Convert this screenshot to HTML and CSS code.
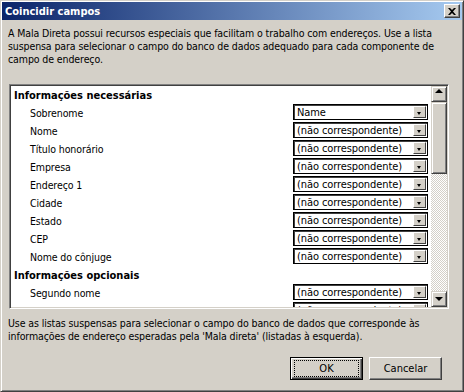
FILE: index.html
```html
<!DOCTYPE html>
<html lang="pt">
  <head>
    <meta charset="UTF-8" />
    <title>Coincidir campos</title>
    <link rel="stylesheet" href="styles.css">
  </head>
  <body>
    <div class="window">
      <div class="titlebar">
        <span class="title">Coincidir campos</span>
        <span class="close">
          <svg width="8" height="7" viewBox="0 0 8 7"><path d="M0 0h2l2 2 2-2h2L5 3.5 8 7H6L4 5 2 7H0l3-3.5z" fill="#000"/></svg>
        </span>
      </div>

      <p class="intro">A Mala Direta possui recursos especiais que facilitam o trabalho com endereços. Use a lista suspensa para selecionar o campo do banco de dados adequado para cada componente de campo de endereço.</p>

      <div class="listbox">
        <div class="rows">
          <div class="row head">Informações necessárias</div>
          <div class="row"><span class="label">Sobrenome</span><span class="combo"><span class="val">Name</span><span class="drop"></span></span></div>
          <div class="row"><span class="label">Nome</span><span class="combo"><span class="val">(não correspondente)</span><span class="drop"></span></span></div>
          <div class="row"><span class="label">Título honorário</span><span class="combo"><span class="val">(não correspondente)</span><span class="drop"></span></span></div>
          <div class="row"><span class="label">Empresa</span><span class="combo"><span class="val">(não correspondente)</span><span class="drop"></span></span></div>
          <div class="row"><span class="label">Endereço 1</span><span class="combo"><span class="val">(não correspondente)</span><span class="drop"></span></span></div>
          <div class="row"><span class="label">Cidade</span><span class="combo"><span class="val">(não correspondente)</span><span class="drop"></span></span></div>
          <div class="row"><span class="label">Estado</span><span class="combo"><span class="val">(não correspondente)</span><span class="drop"></span></span></div>
          <div class="row"><span class="label">CEP</span><span class="combo"><span class="val">(não correspondente)</span><span class="drop"></span></span></div>
          <div class="row"><span class="label">Nome do cônjuge</span><span class="combo"><span class="val">(não correspondente)</span><span class="drop"></span></span></div>
          <div class="row head">Informações opcionais</div>
          <div class="row"><span class="label">Segundo nome</span><span class="combo"><span class="val">(não correspondente)</span><span class="drop"></span></span></div>
          <div class="row"><span class="label">Sufixo</span><span class="combo"><span class="val">(não correspondente)</span><span class="drop"></span></span></div>
        </div>
        <div class="scrollbar">
          <span class="sbtn up"></span>
          <div class="track"><span class="thumb"></span></div>
          <span class="sbtn down"></span>
        </div>
      </div>

      <p class="note">Use as listas suspensas para selecionar o campo do banco de dados que corresponde às informações de endereço esperadas pela 'Mala direta' (listadas à esquerda).</p>

      <div class="buttons">
        <button class="btn default"><span class="focus">OK</span></button>
        <button class="btn">Cancelar</button>
      </div>
    </div>
  </body>
</html>
```

FILE: styles.css
```css
body {
  margin: 0;
  background: #d4d0c8;
  font-family: "DejaVu Sans Condensed", "DejaVu Sans", sans-serif;
  font-size: 10.5px;
  letter-spacing: -0.1px;
  color: #000;
}

.window {
  width: 464px;
  height: 392px;
  box-sizing: border-box;
  background: #d4d0c8;
  border: 1px solid;
  border-color: #d4d0c8 #404040 #404040 #d4d0c8;
  box-shadow: inset 1px 1px #fff, inset -1px -1px #808080;
  padding: 1px;
}

.titlebar {
  height: 18px;
  display: flex;
  align-items: center;
  justify-content: space-between;
  padding: 0 2px 0 3px;
  background: linear-gradient(to right, #0a246a, #a6caf0);
}

.title {
  color: #fff;
  font-weight: bold;
  font-size: 11px;
  letter-spacing: 0;
}

.close {
  width: 16px;
  height: 14px;
  box-sizing: border-box;
  display: flex;
  align-items: center;
  justify-content: center;
  background: #d4d0c8;
  border: 1px solid;
  border-color: #fff #404040 #404040 #fff;
  box-shadow: inset -1px -1px #808080;
}

.intro {
  margin: 7px 0 0;
  padding: 0 6px 0 6px;
  line-height: 13px;
}

.listbox {
  margin: 18px 0 0 7px;
  width: 440px;
  height: 225px;
  box-sizing: border-box;
  display: flex;
  background: #fff;
  border: 1px solid;
  border-color: #808080 #fff #fff #808080;
  box-shadow: inset 1px 1px #404040, inset -1px -1px #d4d0c8;
  padding: 1px;
}

.rows {
  flex: 1;
  overflow: hidden;
}

.row {
  height: 18px;
  display: flex;
  align-items: center;
  padding-left: 19px;
}

.row.head {
  padding-left: 3px;
  font-weight: bold;
  font-size: 11px;
  letter-spacing: 0;
}

.label {
  flex: 1;
}

.combo {
  align-self: flex-start;
  width: 135px;
  height: 16px;
  margin-right: 3px;
  box-sizing: border-box;
  display: flex;
  align-items: center;
  background: #fff;
  border: 1px solid #000;
  box-shadow: inset 1px 1px #404040;
  padding: 1px 1px 1px 3px;
  font-size: 11px;
}

.val {
  flex: 1;
}

.drop {
  width: 13px;
  height: 12px;
  box-sizing: border-box;
  position: relative;
  background: #d4d0c8;
  border: 1px solid;
  border-color: #fff #404040 #404040 #fff;
}

.drop::after {
  content: "";
  position: absolute;
  left: 3px;
  top: 5px;
  border: 2.5px solid transparent;
  border-top: 3px solid #000;
  border-bottom: 0;
}

.scrollbar {
  width: 16px;
  display: flex;
  flex-direction: column;
}

.sbtn {
  width: 16px;
  height: 16px;
  box-sizing: border-box;
  position: relative;
  background: #d4d0c8;
  border: 1px solid;
  border-color: #d4d0c8 #404040 #404040 #d4d0c8;
  box-shadow: inset 1px 1px #fff, inset -1px -1px #808080;
}

.sbtn::after {
  content: "";
  position: absolute;
  left: 3px;
  border: 4px solid transparent;
}

.sbtn.up::after {
  top: 2px;
  border-bottom: 4px solid #000;
  border-top: 0;
}

.sbtn.down::after {
  top: 5px;
  border-top: 4px solid #000;
  border-bottom: 0;
}

.track {
  flex: 1;
  background-color: #fff;
  background-image: repeating-conic-gradient(#d4d0c8 0 25%, #fff 0 50%);
  background-size: 2px 2px;
}

.thumb {
  display: block;
  height: 72px;
  box-sizing: border-box;
  background: #d4d0c8;
  border: 1px solid;
  border-color: #d4d0c8 #404040 #404040 #d4d0c8;
  box-shadow: inset 1px 1px #fff, inset -1px -1px #808080;
}

.note {
  margin: 8px 0 0;
  padding: 0 8px 0 6px;
  line-height: 13px;
}

.buttons {
  margin-top: 14px;
  display: flex;
  justify-content: flex-end;
  gap: 6px;
  padding-right: 20px;
}

.btn {
  width: 73px;
  height: 23px;
  box-sizing: border-box;
  font: inherit;
  font-size: 11px;
  color: #000;
  background: #d4d0c8;
  border: 1px solid;
  border-color: #fff #404040 #404040 #fff;
  box-shadow: inset -1px -1px #808080;
  padding: 0;
}

.btn.default {
  border: 1px solid #000;
  box-shadow: inset 1px 1px #fff, inset -1px -1px #404040, inset -2px -2px #808080;
  display: flex;
  align-items: center;
  justify-content: center;
}

.focus {
  width: 63px;
  height: 15px;
  display: flex;
  align-items: center;
  justify-content: center;
  outline: 1px dotted #000;
}
```
